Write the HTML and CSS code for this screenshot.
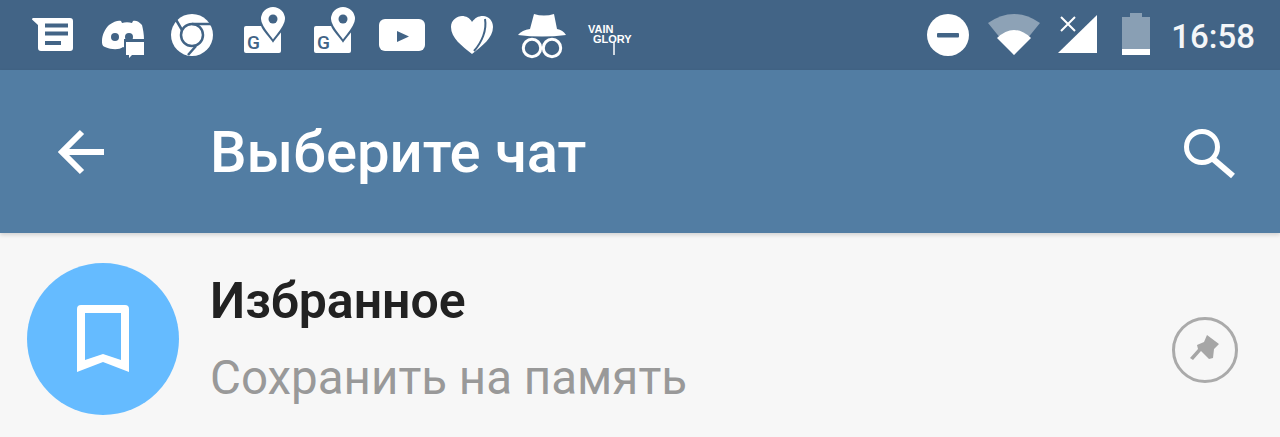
FILE: index.html
```html
<!DOCTYPE html>
<html lang="en">
<head>
    <meta charset="UTF-8">
    <meta name="viewport" content="width=device-width, initial-scale=1.0">
    <title>Выберите чат</title>
    <link rel="stylesheet" href="styles.css">
</head>
<body>
    <div class="status-bar">
        <div class="notify-icons">
            <svg class="slot" viewBox="0 0 70 70">
                <path fill="#fff" d="M15 18H52a3 3 0 0 1 3 3V48a3 3 0 0 1-3 3H23a3 3 0 0 1-3-3V25L14 19.500Q14 18 15 18Z"/>
                <path fill="#426486" d="M27 23.500H50V27.500H27ZM27 31.500H50V35.500H27ZM27 41H43V45H27Z"/>
            </svg>
            <svg class="slot" viewBox="0 0 70 70">
                <path fill="#fff" d="M21 25C26 21 31 20 33 21L34 23C37 22 41 22 44 23L45 21C47 20 51 21 54 25C55 29 56 34 56 40L42 42V50L35 47C31 50 24 50 17 47C14 46 14 43 14 41C14 35 17 29 21 25Z"/>
                <circle cx="27" cy="37" r="4" fill="#426486"/>
                <circle cx="41" cy="37" r="4" fill="#426486"/>
                <path fill="#426486" d="M36 39H58V60H36Z"/>
                <path fill="#fff" d="M38 42H56V55H44L41 58V55H38Z"/>
            </svg>
            <svg class="slot" viewBox="0 0 70 70">
                <circle cx="34" cy="35" r="21" fill="#fff"/>
                <circle cx="34" cy="35" r="11" fill="none" stroke="#426486" stroke-width="2.500"/>
                <path fill="none" stroke="#426486" stroke-width="2.500" d="M34 24H53M24 30L17 18M38 46L30 55"/>
            </svg>
            <svg class="slot" viewBox="0 0 70 70">
                <rect x="16" y="26" width="37" height="27" rx="2" fill="#fff"/>
                <path fill="#fff" stroke="#426486" stroke-width="2" d="M45 41C39 33 32 26 32 19A13 13 0 0 1 58 19C58 26 51 33 45 41Z"/>
                <circle cx="45" cy="19" r="4.500" fill="#426486"/>
                <text class="map-g" x="19" y="49">G</text>
            </svg>
            <svg class="slot" viewBox="0 0 70 70">
                <rect x="16" y="26" width="37" height="27" rx="2" fill="#fff"/>
                <path fill="#fff" stroke="#426486" stroke-width="2" d="M45 41C39 33 32 26 32 19A13 13 0 0 1 58 19C58 26 51 33 45 41Z"/>
                <circle cx="45" cy="19" r="4.500" fill="#426486"/>
                <text class="map-g" x="19" y="49">G</text>
            </svg>
            <svg class="slot" viewBox="0 0 70 70">
                <rect x="11" y="19" width="46" height="32" rx="6" fill="#fff"/>
                <path fill="#426486" d="M29 31L41 36.500L29 42Z"/>
            </svg>
            <svg class="slot" viewBox="0 0 70 70">
                <path fill="#fff" d="M34 54C24 46 13 38 13 27C13 20 19 16 24 16C28 16 32 18 34 22C37 18 40 16 45 16C51 16 55 21 55 27C55 38 44 46 34 54Z"/>
                <path fill="none" stroke="#426486" stroke-width="2" d="M47 19C49 30 44 42 36 51"/>
            </svg>
            <svg class="slot" viewBox="0 0 70 70">
                <path fill="#fff" d="M26 14Q36 17 46 14L49 29Q55 30 58 35Q34 38 10 35Q14 30 22 29Z"/>
                <circle cx="24" cy="48" r="8.700" fill="none" stroke="#fff" stroke-width="3"/>
                <circle cx="44" cy="48" r="8.700" fill="none" stroke="#fff" stroke-width="3"/>
            </svg>
            <svg class="slot" viewBox="0 0 70 70">
                <text class="vg-line" x="10" y="33">VAIN</text>
                <text class="vg-line" x="15" y="43">GLORY</text>
                <path stroke="#fff" stroke-width="1.500" d="M36 42V55"/>
            </svg>
        </div>
        <div class="system-icons">
            <svg class="dnd" viewBox="0 0 42 42">
                <circle cx="21" cy="21" r="21" fill="#fff"/>
                <rect x="10" y="19" width="22" height="4.500" rx="1" fill="#426486"/>
            </svg>
            <svg class="wifi" viewBox="0 0 52 42">
                <path fill="#fff" opacity=".4" d="M0 9Q26 -9 52 9L26 41Z"/>
                <path fill="#fff" d="M9 24Q26 8 43 24L26 41Z"/>
            </svg>
            <svg class="signal" viewBox="0 0 40 42">
                <path fill="#fff" d="M39 2V40H0Z"/>
                <path fill="none" stroke="#fff" stroke-width="2" d="M3 4L17 18M17 4L3 18"/>
            </svg>
            <svg class="battery" viewBox="0 0 28 42">
                <path fill="#fff" opacity=".38" d="M8 0H20V4H28V36H0V4H8Z"/>
                <rect y="36" width="28" height="6" fill="#fff"/>
            </svg>
            <span class="clock">16:58</span>
        </div>
    </div>
    <header class="toolbar">
        <svg class="back" viewBox="0 0 52 50">
            <path fill="none" stroke="#fff" stroke-width="6" d="M48 25H6M26 5L6 25L26 45"/>
        </svg>
        <h1 class="title">Выберите чат</h1>
        <svg class="search" viewBox="0 0 54 52">
            <circle cx="20" cy="20" r="15.500" fill="none" stroke="#fff" stroke-width="5"/>
            <path stroke="#fff" stroke-width="6" d="M30 31L51 49"/>
        </svg>
    </header>
    <div class="chat-row">
        <div class="avatar">
            <svg class="bookmark" viewBox="0 0 53 68">
                <path fill="#fff" fill-rule="evenodd" d="M4 0H48a4 4 0 0 1 4 4V67L26 57L0 67V4a4 4 0 0 1 4-4ZM8 8V55L26 49L44 55V8Z"/>
            </svg>
        </div>
        <div class="chat-text">
            <div class="chat-name">Избранное</div>
            <div class="chat-sub">Сохранить на память</div>
        </div>
        <div class="pin-badge">
            <svg class="pin" viewBox="0 0 34 34">
                <path fill="#a6a6a6" d="M19 2L31 11L26 16L25 25L21 26L13 18L5 27L2 25L10 16L9 12L16 9Z"/>
            </svg>
        </div>
    </div>
</body>
</html>
```

FILE: styles.css
```css
* { box-sizing: border-box; margin: 0; padding: 0; }
html, body { height: 100%; }
body {
    background: #f7f7f7;
    font-family: Roboto, "Noto Sans", sans-serif;
    overflow: hidden;
}
.status-bar {
    height: 70px;
    background: #426486;
    display: flex;
    align-items: center;
    justify-content: space-between;
    padding-left: 18px;
    padding-right: 25px;
}
.notify-icons { display: flex; }
.slot { width: 70px; height: 70px; display: block; }
.map-g {
    fill: #426486;
    font-family: Roboto, sans-serif;
    font-size: 19px;
    font-weight: 500;
}
.vg-line {
    fill: #fff;
    font-family: "Liberation Sans", sans-serif;
    font-size: 11px;
    font-weight: 700;
}
.system-icons { display: flex; align-items: center; }
.dnd { width: 42px; height: 42px; }
.wifi { width: 52px; height: 42px; margin-left: 19px; }
.signal { width: 40px; height: 42px; margin-left: 18px; margin-bottom: 2px; }
.battery { width: 28px; height: 42px; margin-left: 24px; margin-bottom: 2px; }
.clock {
    margin-left: 21px;
    color: #f4f6f8;
    font-size: 33px;
    font-weight: 500;
    margin-top: 3px;
}
.toolbar {
    height: 163px;
    background: #527da3;
    display: flex;
    align-items: center;
    padding-left: 56px;
    padding-right: 44px;
    box-shadow: 0 2px 4px rgba(0, 0, 0, 0.15);
    position: relative;
}
.back { width: 52px; height: 50px; }
.title {
    margin-left: 102px;
    color: #fff;
    font-size: 58px;
    font-weight: 500;
    line-height: 1;
}
.search { width: 54px; height: 52px; margin-left: auto; margin-top: 3px; }
.chat-row {
    display: flex;
    padding: 30px 42px 0 27px;
}
.avatar {
    width: 152px;
    height: 152px;
    flex: none;
    border-radius: 50%;
    background: #65bbff;
    display: flex;
    align-items: center;
    justify-content: center;
}
.bookmark { width: 53px; height: 68px; }
.chat-text { margin-left: 31px; flex: 1; }
.chat-name {
    color: #222;
    font-size: 50px;
    font-weight: 600;
    line-height: 52px;
    margin-top: 12px;
}
.chat-sub {
    color: #999;
    font-size: 47.500px;
    line-height: 52px;
    margin-top: 25px;
}
.pin-badge {
    width: 66px;
    height: 66px;
    flex: none;
    margin-top: 54px;
    border: 3px solid #aaa;
    border-radius: 50%;
    display: flex;
    align-items: center;
    justify-content: center;
}
.pin { width: 34px; height: 34px; }
```
